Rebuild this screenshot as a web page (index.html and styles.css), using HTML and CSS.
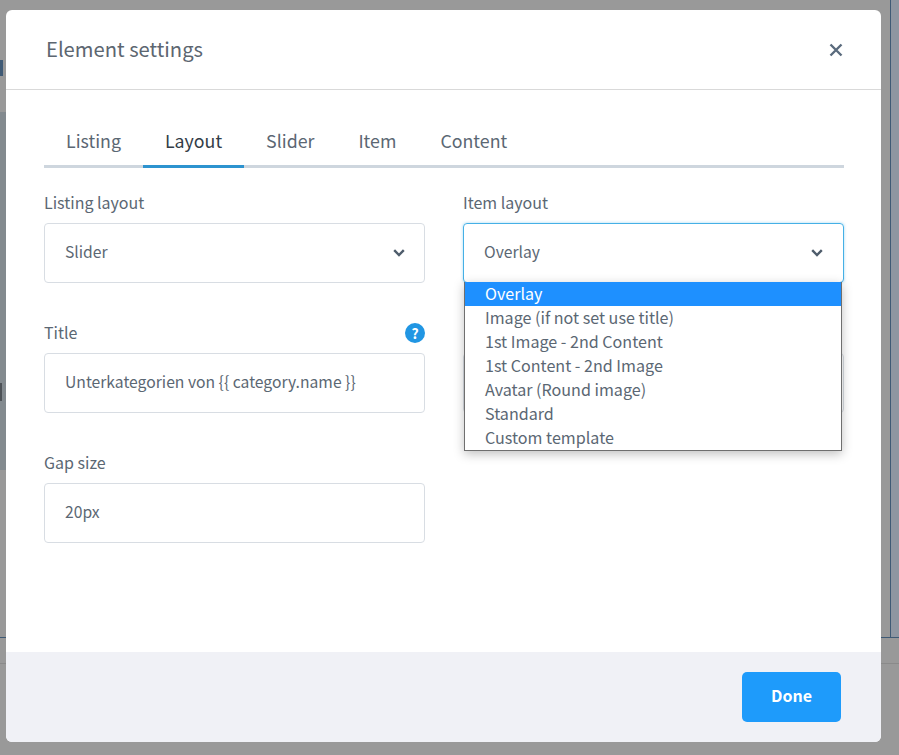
FILE: index.html
```html
<!DOCTYPE html>
<html lang="en">

	<head>
		<meta charset="UTF-8">
		<title>Element settings</title>
		<link rel="stylesheet" href="styles.css">
	</head>

	<body>
		<div class="backdrop">
			<div class="back-top">
				<div class="back-mark"></div>
			</div>
			<div class="back-main">
				<div class="back-left">
					<div class="back-glyph"></div>
				</div>
				<div class="back-panel"></div>
			</div>
			<div class="back-foot">
				<div class="back-rule">
					<span class="rule-left"></span>
					<span class="rule-right"></span>
				</div>
				<div class="back-line"></div>
			</div>
		</div>

		<div class="modal">
			<div class="modal-head">
				<h2>Element settings</h2>
				<svg class="close" width="14" height="14" viewBox="0 0 14 14">
					<path d="M1.5 1.5 L12.5 12.5 M12.5 1.5 L1.5 12.5" stroke="#5a6b7d" stroke-width="2.4" fill="none"/>
				</svg>
			</div>

			<div class="modal-body">
				<ul class="tabs">
					<li>Listing</li>
					<li class="active">Layout</li>
					<li>Slider</li>
					<li>Item</li>
					<li>Content</li>
				</ul>

				<div class="form">
					<div class="field">
						<div class="label">Listing layout</div>
						<div class="input select">
							<span>Slider</span>
							<svg width="12" height="8" viewBox="0 0 12 8"><path d="M1.2 1.2 L6 6 L10.8 1.2" stroke="#4f5d6c" stroke-width="2.4" fill="none"/></svg>
						</div>
					</div>

					<div class="field">
						<div class="label">Item layout</div>
						<div class="input select focus">
							<span>Overlay</span>
							<svg width="12" height="8" viewBox="0 0 12 8"><path d="M1.2 1.2 L6 6 L10.8 1.2" stroke="#4f5d6c" stroke-width="2.4" fill="none"/></svg>
						</div>
						<ul class="dropdown">
							<li class="selected">Overlay</li>
							<li>Image (if not set use title)</li>
							<li>1st Image - 2nd Content</li>
							<li>1st Content - 2nd Image</li>
							<li>Avatar (Round image)</li>
							<li>Standard</li>
							<li>Custom template</li>
						</ul>
					</div>

					<div class="field">
						<div class="label">Title <span class="help">?</span></div>
						<div class="input">Unterkategorien von {{ category.name }}</div>
					</div>

					<div class="field">
						<div class="label">&nbsp;</div>
						<div class="input"></div>
					</div>

					<div class="field">
						<div class="label">Gap size</div>
						<div class="input">20px</div>
					</div>
				</div>
			</div>

			<div class="modal-foot">
				<button class="done">Done</button>
			</div>
		</div>
	</body>

</html>
```
FILE: styles.css
```css
* {
	margin: 0;
	padding: 0;
	list-style: none;
	box-sizing: border-box;
}

html, body {
	height: 755px;
	overflow: hidden;
}

body {
	position: relative;
	font-family: "Noto Sans CJK SC", "Noto Sans", sans-serif;
	color: #5b6773;
	background: #999999;
}

/* page behind the overlay */
.backdrop {
	height: 755px;
	display: flex;
	flex-direction: column;
}

.back-top {
	height: 112px;
	padding-top: 60px;
	background: #999999;
}

.back-mark {
	width: 3px;
	height: 16px;
	background: #3f5a75;
}

.back-main {
	height: 525px;
	display: flex;
	justify-content: space-between;
}

.back-left {
	width: 6px;
	height: 358px;
	padding-top: 271px;
	background: #838a8f;
}

.back-glyph {
	width: 2px;
	height: 18px;
	background: #4d5257;
}

.back-panel {
	width: 9px;
	margin-top: -112px;
	background: #8e96a1;
	border-left: 1px solid #3f5a75;
}

.back-foot {
	flex: 1;
	background: #999999;
	display: flex;
	flex-direction: column;
}

.back-rule {
	height: 1px;
	margin-bottom: 25px;
	display: flex;
	justify-content: space-between;
}

.rule-left {
	width: 6px;
	background: #3f5a75;
}

.rule-right {
	width: 18px;
	background: #3f5a75;
}

.back-line {
	height: 1px;
	background: #8a8a8a;
}

/* modal */
.modal {
	position: absolute;
	left: 6px;
	top: 10px;
	width: 875px;
	height: 732px;
	background: #ffffff;
	border-radius: 6px;
	display: flex;
	flex-direction: column;
	overflow: hidden;
}

.modal-head {
	height: 80px;
	padding: 0 38px 0 40px;
	border-bottom: 1px solid #d9d9d9;
	display: flex;
	align-items: center;
	justify-content: space-between;
}

.modal-head h2 {
	font-size: 20.2px;
	font-weight: 400;
	line-height: 80px;
	height: 80px;
	margin-top: -2px;
	color: #5c6670;
}

.modal-body {
	flex: 1;
	padding: 32px 37px 0 38px;
}

.tabs {
	display: flex;
	height: 46px;
	border-bottom: 3px solid #ced6de;
	font-size: 17.8px;
	line-height: 36px;
}

.tabs li {
	padding: 0 22px;
	height: 46px;
}

.tabs .active {
	color: #333d47;
	border-bottom: 3px solid #2d93cf;
}

.form {
	display: grid;
	grid-template-columns: 381px 381px;
	column-gap: 38px;
	row-gap: 40px;
	margin-top: 25px;
}

.field {
	position: relative;
}

.label {
	height: 30px;
	font-size: 16px;
	line-height: 18px;
	display: flex;
	justify-content: space-between;
}

.help {
	width: 20px;
	height: 20px;
	border-radius: 50%;
	background: #2196e3;
	color: #ffffff;
	font-size: 14px;
	font-weight: 700;
	line-height: 20px;
	text-align: center;
}

.input {
	height: 60px;
	padding: 0 20px;
	border: 1px solid #d8dde3;
	border-radius: 4px;
	font-size: 15.7px;
	line-height: 55px;
}

.select {
	display: flex;
	align-items: center;
	justify-content: space-between;
	padding-right: 19px;
}

.select span {
	line-height: 20px;
	margin-top: -3px;
}

.focus {
	padding-right: 20px;
	border-color: #45b0e6;
	box-shadow: 0 0 3px rgba(69, 176, 230, 0.5);
}

.dropdown {
	position: absolute;
	z-index: 2;
	left: 1px;
	top: 89px;
	width: 378px;
	background: #ffffff;
	border: 1px solid #6f6f6f;
	border-top: 0;
	box-shadow: 0 3px 10px rgba(0, 0, 0, 0.25);
	font-size: 16.1px;
	line-height: 23px;
}

.dropdown li {
	height: 24px;
	padding-left: 20px;
}

.dropdown .selected {
	background: #1e90ff;
	color: #ffffff;
}

.modal-foot {
	height: 90px;
	padding: 20px 40px 0 0;
	background: #f0f1f6;
	display: flex;
	justify-content: flex-end;
}

.done {
	width: 99px;
	height: 50px;
	padding-bottom: 4px;
	border: 0;
	border-radius: 5px;
	background: #1e9bfb;
	color: #ffffff;
	font-family: inherit;
	font-size: 16px;
	font-weight: 700;
}
```
